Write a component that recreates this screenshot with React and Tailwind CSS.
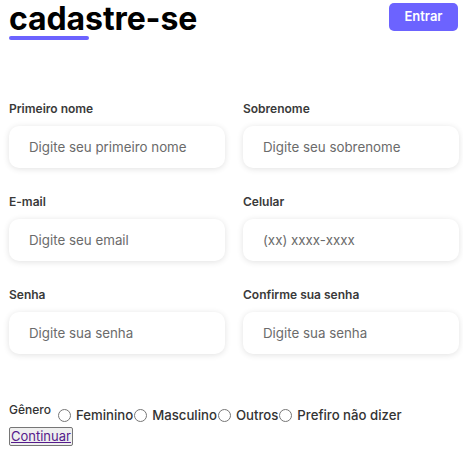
import React from "react";

const fields = [
  ["Primeiro nome", "Digite seu primeiro nome", "text"],
  ["Sobrenome", "Digite seu sobrenome", "text"],
  ["E-mail", "Digite seu email", "email"],
  ["Celular", "(xx) xxxx-xxxx", "tel"],
  ["Senha", "Digite sua senha", "password"],
  ["Confirme sua senha", "Digite sua senha", "password"],
];

const genders = ["Feminino", "Masculino", "Outros", "Prefiro não dizer"];

export default function App() {
  return (
    <div className="w-[463px] h-[450px] bg-white font-['Inter',sans-serif] text-[#000]">
      <div className="flex justify-between pl-[9px] pr-[5px] pt-[3px]">
        <div>
          <h1 className="text-[32px] font-bold leading-[32px] tracking-[-0.1px]">cadastre-se</h1>
          <div className="mt-[1px] w-[80px] h-[4px] rounded-full bg-[#6c63ff]" />
        </div>
        <button className="w-[69px] h-[28px] rounded-[5px] bg-[#6c63ff] text-white text-[13px] font-semibold">
          Entrar
        </button>
      </div>

      <form className="pl-[9px] pr-[4px] mt-[61px]">
        <div className="grid grid-cols-2 gap-x-[18px] gap-y-[26px]">
          {fields.map(([label, ph, type]) => (
            <div key={label + ph} className="flex flex-col">
              <label className="text-[12px] font-semibold text-[#3a3a3a] leading-[15px]">{label}</label>
              <input
                type={type}
                placeholder={ph}
                className="mt-[10px] h-[42px] rounded-[10px] bg-white pl-[20px] text-[13.333px] text-[#333] placeholder:text-[#6b6b6b] shadow-[0_1px_6px_rgba(0,0,0,0.12)] outline-none"
              />
            </div>
          ))}
        </div>

        <div className="mt-[48px] flex items-start text-[#333]">
          <span className="text-[12px] font-medium leading-[15px]">Gênero</span>
          <div className="flex items-center mt-[5px] text-[13.2px] font-medium leading-[16px]">
            {genders.map((g, i) => (
              <label key={g} className="flex items-center">
                <input
                  type="radio"
                  name="genero"
                  className={`my-0 mr-[5px] w-[13px] h-[13px] ${i === 0 ? "ml-[7px]" : "ml-[1px]"}`}
                />
                {g}
              </label>
            ))}
          </div>
        </div>
        <button
          type="button"
          className="mt-[2px] h-[19px] px-[1px] border border-[#767676] rounded-[2px] bg-[#efefef] text-[13px] leading-[15px]"
        >
          <a href="#" className="text-[#551a8b] underline">Continuar</a>
        </button>
      </form>
    </div>
  );
}
